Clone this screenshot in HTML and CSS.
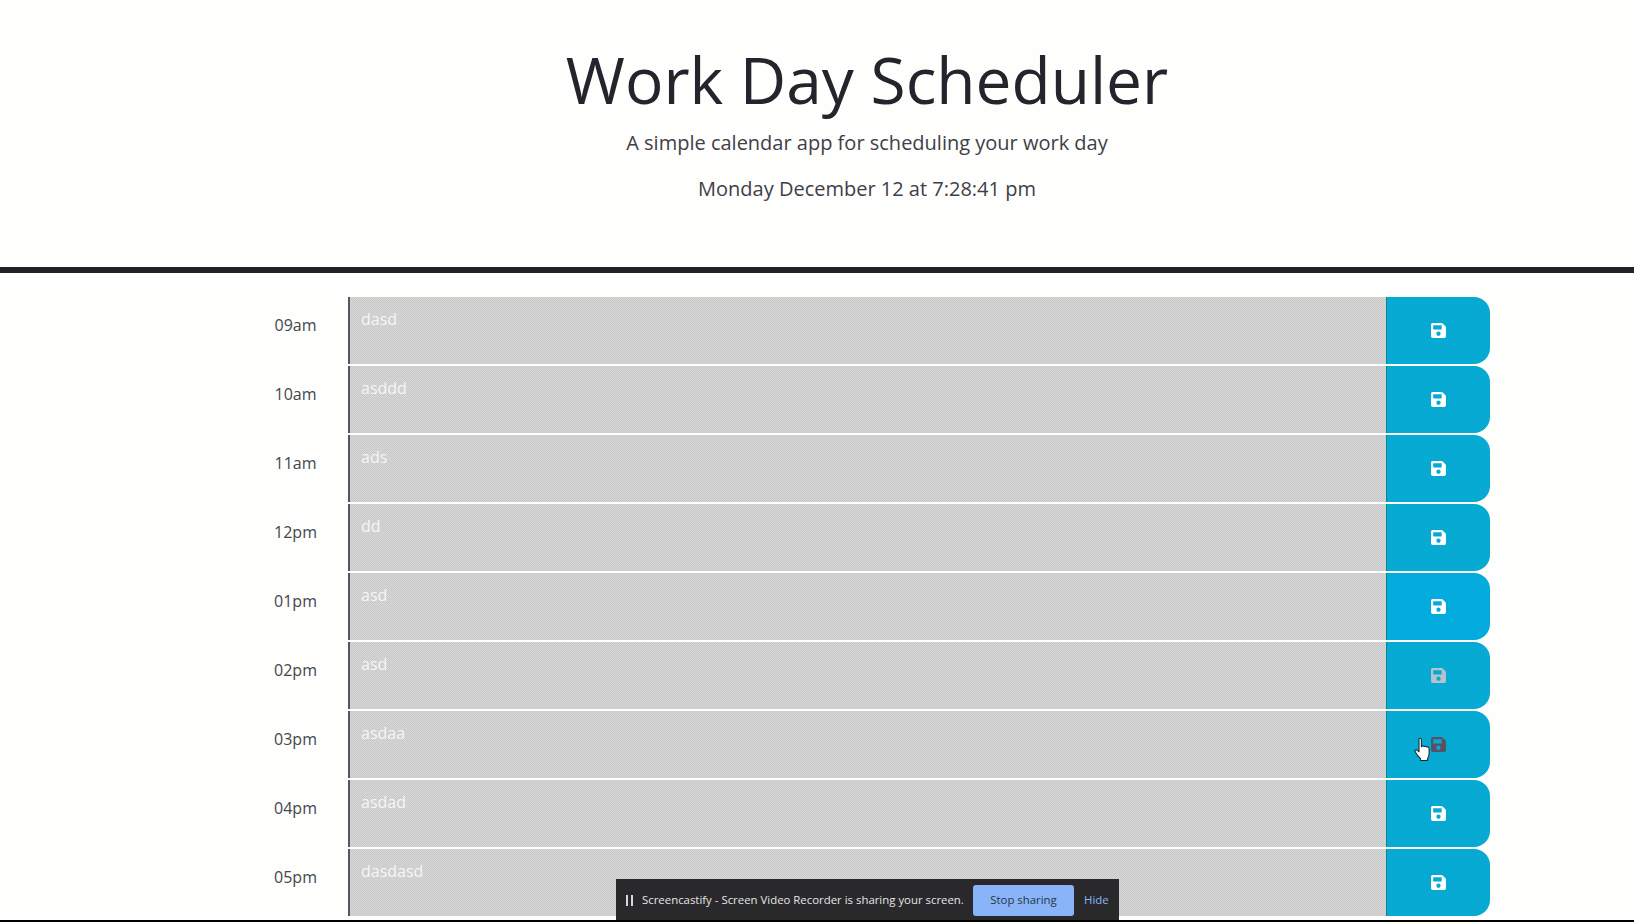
FILE: index.html
```html
<!DOCTYPE html>
<html lang="en">
<head>
<meta charset="utf-8">
<title>Work Day Scheduler</title>
<link rel="stylesheet" href="styles.css">
</head>
<body>
<svg class="sprite" width="0" height="0" aria-hidden="true"><symbol id="save" viewBox="0 0 448 512"><path d="M433.941 129.941l-83.882-83.882A48 48 0 0 0 316.118 32H48C21.49 32 0 53.49 0 80v352c0 26.51 21.49 48 48 48h352c26.51 0 48-21.49 48-48V163.882a48 48 0 0 0-14.059-33.941zM224 416c-35.346 0-64-28.654-64-64 0-35.346 28.654-64 64-64s64 28.654 64 64c0 35.346-28.654 64-64 64zm96-304.52V212c0 6.627-5.373 12-12 12H76c-6.627 0-12-5.373-12-12V108c0-6.627 5.373-12 12-12h228.52c3.183 0 6.235 1.264 8.485 3.515l3.48 3.48A11.996 11.996 0 0 1 320 111.48z"/></symbol></svg>
<header class="jumbotron">
  <h1 class="title">Work Day Scheduler</h1>
  <p class="lead">A simple calendar app for scheduling your work day</p>
  <p class="date">Monday December 12 at 7:28:41 pm</p>
</header>
<main class="schedule">
  <div class="row"><div class="hour">09am</div><textarea class="entry">dasd</textarea><button class="save-btn"><svg class="icon"><use href="#save"/></svg></button></div>
  <div class="row"><div class="hour">10am</div><textarea class="entry">asddd</textarea><button class="save-btn"><svg class="icon"><use href="#save"/></svg></button></div>
  <div class="row"><div class="hour">11am</div><textarea class="entry">ads</textarea><button class="save-btn"><svg class="icon"><use href="#save"/></svg></button></div>
  <div class="row"><div class="hour">12pm</div><textarea class="entry">dd</textarea><button class="save-btn"><svg class="icon"><use href="#save"/></svg></button></div>
  <div class="row"><div class="hour">01pm</div><textarea class="entry">asd</textarea><button class="save-btn save-btn-blue"><svg class="icon"><use href="#save"/></svg></button></div>
  <div class="row"><div class="hour">02pm</div><textarea class="entry">asd</textarea><button class="save-btn"><svg class="icon icon-faded"><use href="#save"/></svg></button></div>
  <div class="row"><div class="hour">03pm</div><textarea class="entry">asdaa</textarea><button class="save-btn"><svg class="icon icon-dark"><use href="#save"/></svg>
    <svg class="cursor" viewBox="0 0 17 25"><path d="M5 2.500c0-1.600 2.400-1.600 2.400 0v7.200l.5-.4c.9-.7 2-.4 2.400.3.8-.6 2-.3 2.400.5.9-.5 2.300 0 2.400 1.200v5.400c0 2-.6 3.300-1.500 4.800v2H6.500v-1.800C4.700 20 2.500 17.300 1.200 14.800.5 13.400 2 12.300 3.200 13.200L5 14.800z" fill="#fff" stroke="#1c2a33" stroke-width="1.100" stroke-linejoin="round"/></svg>
  </button></div>
  <div class="row"><div class="hour">04pm</div><textarea class="entry">asdad</textarea><button class="save-btn"><svg class="icon"><use href="#save"/></svg></button></div>
  <div class="row"><div class="hour">05pm</div><textarea class="entry">dasdasd</textarea><button class="save-btn"><svg class="icon"><use href="#save"/></svg></button></div>
</main>
<div class="page-end"></div>
<div class="share-bar">
  <span class="pause"><i></i><i></i></span>
  <span class="share-text">Screencastify - Screen Video Recorder is sharing your screen.</span>
  <span class="stop">Stop sharing</span>
  <span class="hide">Hide</span>
</div>
</body>
</html>
```
FILE: styles.css
```css
* { box-sizing: border-box; }
html, body { margin: 0; height: 922px; overflow: hidden; }
body {
  background: #fefefc;
  font-family: "Open Sans", sans-serif;
  font-size: 16px;
  color: #3e4048;
  position: relative;
}
.sprite { display: block; position: absolute; }
.jumbotron {
  height: 273px;
  padding: 41px 0 0 100px;
  text-align: center;
  border-bottom: 6px solid #22222a;
}
.title {
  margin: 0;
  font-size: 64px;
  font-weight: 400;
  line-height: 78px;
  color: #24252c;
}
.lead {
  margin: 10px 0 0;
  font-size: 20px;
  line-height: 28px;
  color: #3e4048;
}
.date {
  margin: 18px 0 0;
  font-size: 20px;
  line-height: 28px;
  color: #3e4048;
}
.schedule {
  margin-top: 24px;
  padding-left: 245px;
}
.row {
  display: grid;
  grid-template-columns: 103px 1038px 104px;
  height: 69px;
  border-bottom: 2px solid #fefefe;
}
.hour {
  padding: 18px 2px 0 0;
  text-align: center;
  line-height: 20px;
  color: #44464c;
}
.entry {
  display: block;
  width: 100%;
  height: 67px;
  padding: 12px 11px;
  border: 0;
  border-left: 2px solid #55555f;
  border-radius: 0;
  outline: 0;
  resize: none;
  overflow: hidden;
  background: repeating-conic-gradient(#c8c8d6 0 25%, #d8d8c8 0 50%) 0 0 / 2px 2px;
  color: #f6f6f6;
  font: 16px/20px "Open Sans", sans-serif;
}
.save-btn {
  position: relative;
  display: flex;
  align-items: center;
  justify-content: center;
  height: 67px;
  padding: 0;
  border: 0;
  border-left: 1px solid #0f7f91;
  border-radius: 0 16px 16px 0;
  background: repeating-conic-gradient(#00a4e2 0 25%, #0cb0c2 0 50%) 0 0 / 2px 2px;
  color: #fff;
}
.save-btn-blue { background: repeating-conic-gradient(#00a6ea 0 25%, #06b0d0 0 50%) 0 0 / 2px 2px; }
.icon { display: block; width: 15px; height: 17px; fill: currentColor; }
.icon-faded { fill: #b9c2cc; }
.icon-dark { fill: #5c4f63; }
.cursor {
  position: absolute;
  left: 27px;
  top: 26px;
  width: 17px;
  height: 25px;
}
.page-end {
  position: absolute;
  left: 0;
  right: 0;
  top: 920px;
  height: 2px;
  background: #000;
}
.share-bar {
  position: absolute;
  left: 616px;
  top: 879px;
  width: 503px;
  height: 41px;
  padding: 6px 10px 0;
  display: flex;
  align-items: flex-start;
  background: #29292c;
  font: 11.4px/30px "Open Sans", sans-serif;
}
.pause { display: flex; gap: 3px; margin-top: 10px; }
.pause i { display: block; width: 2px; height: 11px; background: #d8d8d8; }
.share-text { margin-left: 9px; width: 321px; color: #e6e6e6; white-space: nowrap; }
.stop {
  margin-left: 10px;
  width: 101px;
  height: 31px;
  border-radius: 3px;
  background: #8ab4f8;
  color: #26344a;
  text-align: center;
}
.hide { margin-left: 10px; color: #8ab4f8; }
```
